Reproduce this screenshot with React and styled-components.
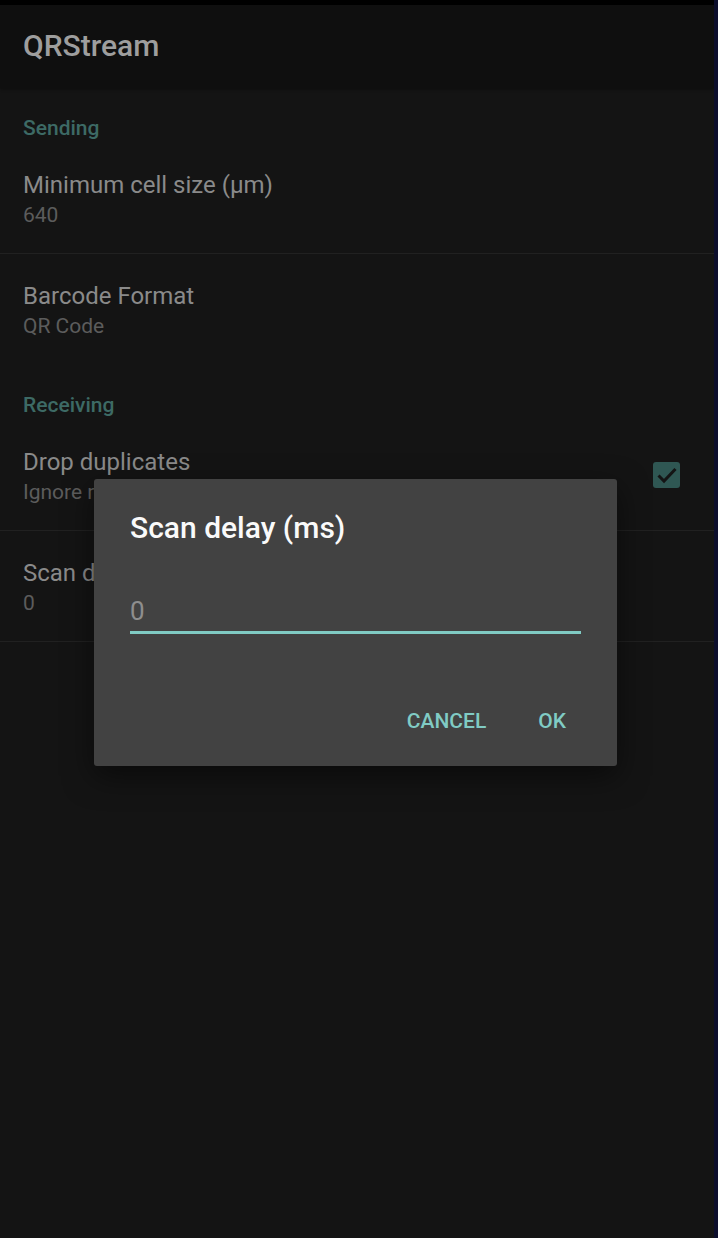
import React from 'react';
import styled, { createGlobalStyle } from 'styled-components';

const GlobalStyle = createGlobalStyle`
  html, body {
    margin: 0;
    padding: 0;
    background: #141414;
  }
  body {
    font-family: Roboto, "Noto Sans", "Liberation Sans", sans-serif;
  }
`;

const Screen = styled.div`
  display: flex;
  width: 718px;
  height: 1238px;
  overflow: hidden;
  position: relative;
  background: #141414;
`;

const Main = styled.div`
  flex: 1;
  display: flex;
  flex-direction: column;
`;

const NavStrip = styled.div`
  width: 4px;
  background: #0c0e2c;
`;

const StatusBar = styled.div`
  height: 5px;
  background: #000;
`;

const Toolbar = styled.header`
  height: 83px;
  display: flex;
  align-items: center;
  padding: 0 23px;
  background: #0f0f0f;
  box-shadow: 0 1px 3px rgba(0, 0, 0, 0.4);
`;

const AppTitle = styled.h1`
  margin: 0 0 2px;
  font-size: 30px;
  font-weight: 500;
  color: #9e9e9e;
`;

const Category = styled.div`
  height: 55px;
  box-sizing: border-box;
  padding: 28px 23px 0;
  font-size: 21px;
  line-height: 24px;
  font-weight: 500;
  color: #3d6a65;
`;

const Item = styled.div`
  display: flex;
  align-items: center;
  height: 111px;
  box-sizing: border-box;
  padding: 0 34px 0 23px;
  border-bottom: 1px solid ${(p) => (p.$divider ? '#212121' : 'transparent')};
`;

const ItemText = styled.div`
  flex: 1;
  padding-top: 3px;
`;

const ItemTitle = styled.div`
  font-size: 24px;
  line-height: 30px;
  color: #8a8a8a;
`;

const ItemSummary = styled.div`
  font-size: 21px;
  line-height: 30px;
  color: #5c5c5c;
`;

const CheckBox = styled.div`
  width: 27px;
  height: 26px;
  border-radius: 3px;
  background: #2f5753;
  display: flex;
  align-items: center;
  justify-content: center;
`;

const Dialog = styled.div`
  position: absolute;
  left: 94px;
  top: 479px;
  width: 523px;
  height: 287px;
  box-sizing: border-box;
  background: #424242;
  border-radius: 3px;
  box-shadow: 0 10px 30px rgba(0, 0, 0, 0.5);
  padding: 31px 36px 18px;
  display: flex;
  flex-direction: column;
`;

const DialogTitle = styled.div`
  font-size: 30px;
  line-height: 36px;
  font-weight: 500;
  color: #fafafa;
`;

const Field = styled.div`
  margin-top: 47px;
  height: 36px;
  font-size: 26px;
  line-height: 36px;
  color: #8e8e8e;
  padding-bottom: 2px;
  border-bottom: 3px solid #80cbc4;
`;

const ButtonBar = styled.div`
  margin-top: auto;
  margin-right: 15px;
  height: 54px;
  display: flex;
  justify-content: flex-end;
  align-items: center;
  gap: 52px;
`;

const TextButton = styled.button`
  border: none;
  background: none;
  padding: 0;
  font-family: inherit;
  font-size: 21px;
  font-weight: 500;
  color: #80cbc4;
  text-transform: uppercase;
`;

const settings = [
  { type: 'category', title: 'Sending' },
  { type: 'item', title: 'Minimum cell size (μm)', summary: '640', divider: true },
  { type: 'item', title: 'Barcode Format', summary: 'QR Code' },
  { type: 'category', title: 'Receiving' },
  { type: 'item', title: 'Drop duplicates', summary: 'Ignore repeated frames', divider: true, checked: true },
  { type: 'item', title: 'Scan delay (ms)', summary: '0', divider: true },
];

export default function App() {
  return (
    <Screen>
      <GlobalStyle />
      <Main>
        <StatusBar />
        <Toolbar>
          <AppTitle>QRStream</AppTitle>
        </Toolbar>
        {settings.map((s) =>
          s.type === 'category' ? (
            <Category key={s.title}>{s.title}</Category>
          ) : (
            <Item key={s.title} $divider={s.divider}>
              <ItemText>
                <ItemTitle>{s.title}</ItemTitle>
                <ItemSummary>{s.summary}</ItemSummary>
              </ItemText>
              {s.checked && (
                <CheckBox>
                  <svg width="24" height="24" viewBox="0 0 24 24">
                    <path d="M3.5 12.5l5.5 5.5L20.5 6" fill="none" stroke="#141414" strokeWidth="3" />
                  </svg>
                </CheckBox>
              )}
            </Item>
          )
        )}
      </Main>
      <NavStrip />
      <Dialog>
        <DialogTitle>Scan delay (ms)</DialogTitle>
        <Field>0</Field>
        <ButtonBar>
          <TextButton>Cancel</TextButton>
          <TextButton>OK</TextButton>
        </ButtonBar>
      </Dialog>
    </Screen>
  );
}
